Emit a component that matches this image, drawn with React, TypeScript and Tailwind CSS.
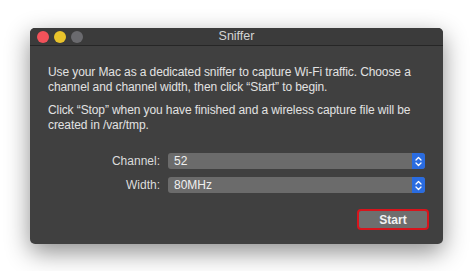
const font = { fontFamily: '"Liberation Sans", Arial, sans-serif' };

const Stepper = () => (
  <div className="flex h-full w-[13px] items-center justify-center rounded-r-[3px] bg-[#2a6ce0]">
    <svg width="7" height="11" viewBox="0 0 7 11" fill="none" stroke="white" strokeWidth="1.3" strokeLinecap="round" strokeLinejoin="round">
      <path d="M1 4 L3.5 1.5 L6 4" />
      <path d="M1 7 L3.5 9.5 L6 7" />
    </svg>
  </div>
);

const SelectRow = ({ label, value }: { label: string; value: string }) => (
  <div className="flex h-[16px] items-center">
    <div className="w-[138px] pr-[8px] text-right text-[12px] leading-none text-[#dcdcdc]">{label}</div>
    <div className="flex h-[16px] w-[257px] items-center justify-between rounded-[3px] bg-[#6b6b6b]">
      <span className="pl-[6px] text-[12px] leading-none text-[#f0f0f0]">{value}</span>
      <Stepper />
    </div>
  </div>
);

export default function App() {
  return (
    <div className="h-[271px] w-[474px] overflow-hidden bg-white pl-[30px] pt-[28px]" style={font}>
      <div className="flex h-[216px] w-[413px] flex-col overflow-hidden rounded-[5px] bg-[#404040] shadow-[0_8px_24px_rgba(0,0,0,0.45)]">
        <div className="relative flex h-[18px] shrink-0 items-center border-b border-[#262626] bg-[#3b3b3b]">
          <div className="flex gap-[5px] pl-[7px]">
            <div className="h-[12px] w-[12px] rounded-full bg-[#f2525a]" />
            <div className="h-[12px] w-[12px] rounded-full bg-[#e9c32b]" />
            <div className="h-[12px] w-[12px] rounded-full bg-[#6a6a6e]" />
          </div>
          <div className="absolute inset-0 flex items-center justify-center text-[12.5px] text-[#d4d4d4]">Sniffer</div>
        </div>
        <div className="flex flex-col pl-[18px] pt-[19px] text-[12px] leading-[15px] tracking-[-0.1px] text-[#e2e2e2]">
          <p className="whitespace-nowrap">
            Use your Mac as a dedicated sniffer to capture Wi-Fi traffic. Choose a
            <br />
            channel and channel width, then click “Start” to begin.
          </p>
          <p className="mt-[8px] whitespace-nowrap">
            Click “Stop” when you have finished and a wireless capture file will be
            <br />
            created in /var/tmp.
          </p>
        </div>
        <div className="mt-[20px] flex flex-col gap-[8px]">
          <SelectRow label="Channel:" value="52" />
          <SelectRow label="Width:" value="80MHz" />
        </div>
        <div className="flex justify-end pr-[14px] pt-[16px]">
          <div className="flex h-[21px] w-[72px] items-center justify-center rounded-[4px] border-2 border-[#d8141c] bg-[#6e6e6e] text-[12px] font-bold text-[#f2f2f2]">
            Start
          </div>
        </div>
      </div>
    </div>
  );
}
